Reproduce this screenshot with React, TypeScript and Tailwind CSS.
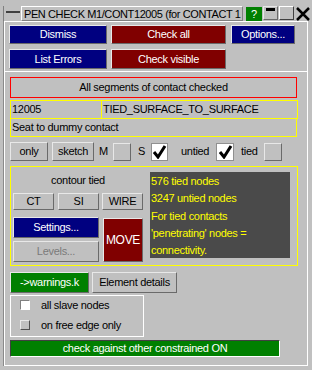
import React from "react";

const raised = "border border-t-[#e8e8e8] border-l-[#e8e8e8] border-b-[#6a6a6a] border-r-[#6a6a6a]";

function Btn({ className, children }: { className: string; children: React.ReactNode }) {
  return (
    <div className={`flex shrink-0 items-center justify-center whitespace-nowrap ${raised} ${className}`}>
      {children}
    </div>
  );
}

function Check() {
  return (
    <svg width="15" height="15" viewBox="0 0 15 15">
      <path d="M2 8 L6 13 L13 2" fill="none" stroke="#000" strokeWidth="3" />
    </svg>
  );
}

export default function App() {
  const info = ["576 tied nodes", "3247 untied nodes", "For tied contacts", "'penetrating' nodes =", "connectivity."];

  return (
    <div className="h-[370px] w-[312px] overflow-hidden bg-[#c0c0c0] font-['Liberation_Sans',sans-serif] text-[11px] leading-none tracking-[-0.3px] text-black">
      {/* title bar */}
      <div className="flex h-[21px] pl-[3px] pt-[6px]">
        <div className="flex h-[15px] w-[18px] items-center justify-center border-l border-[#808080] pb-[3px]">
          <div className="h-[2px] w-[14px] bg-[#404040]" />
        </div>
        <div className="h-[15px] w-[222px] overflow-hidden whitespace-nowrap border border-t-white border-l-white border-b-[#808080] border-r-[#808080] pl-[2px] pt-[2px] tracking-[-0.4px]">
          PEN CHECK M1/CONT12005 (for CONTACT 1
        </div>
        <div className="ml-[3px] mt-[1px] flex h-[14px] w-[16px] items-center justify-center bg-[#008000] text-white">?</div>
        <div className={`ml-[1px] h-[14px] w-[15px] px-[2px] pt-[1px] ${raised}`}>
          <div className="h-[3px] bg-black" />
        </div>
        <div className="ml-[1px] h-[14px] w-[15px] border border-t-white border-l-white border-b-[#404040] border-r-[#404040]" />
        <div className="ml-[1px] flex h-[15px] w-[16px] items-center justify-center">
          <svg width="14" height="14" viewBox="0 0 14 14">
            <path d="M1 1 L13 13 M13 1 L1 13" stroke="#000" strokeWidth="2.5" />
          </svg>
        </div>
      </div>

      {/* main panel */}
      <div className="ml-[3px] w-[305px] border-l border-[#8a8a8a]">
        <div className="h-[345px] w-[304px] border border-white">
          <div className="flex flex-col gap-[5px] pl-[4px] pt-[3px] text-white">
            <div className="flex">
              <Btn className="h-[19px] w-[98px] bg-[#000080]">Dismiss</Btn>
              <Btn className="ml-[4px] h-[19px] w-[115px] bg-[#800000]">Check all</Btn>
              <Btn className="ml-[5px] h-[19px] w-[64px] bg-[#000080]">Options...</Btn>
            </div>
            <div className="flex">
              <Btn className="h-[20px] w-[98px] bg-[#000080]">List Errors</Btn>
              <Btn className="ml-[4px] h-[20px] w-[115px] bg-[#800000]">Check visible</Btn>
            </div>
          </div>
          <div className="mt-[2px] h-[1px] bg-white" />

          <div className="flex flex-col pl-[5px]">
            <div className="mt-[5px] flex h-[21px] w-[287px] items-center justify-center border border-[#ff0000]">
              All segments of contact checked
            </div>
            <div className="mt-[2px] flex h-[19px] w-[288px] border border-[#ffff00]">
              <div className="flex w-[91px] items-center border-r border-[#ffff00] pl-[1px]">12005</div>
              <div className="flex items-center pl-[1px]">TIED_SURFACE_TO_SURFACE</div>
            </div>
            <div className="flex h-[18px] w-[287px] items-center border-x border-b border-[#ffff00] pl-[1px]">
              Seat to dummy contact
            </div>

            {/* display options */}
            <div className="mt-[5px] flex h-[19px] items-center">
              <Btn className="h-[19px] w-[38px]">only</Btn>
              <Btn className="ml-[4px] h-[19px] w-[42px]">sketch</Btn>
              <span className="w-[19px] pl-[5px]">M</span>
              <div className={`h-[18px] w-[18px] ${raised}`} />
              <span className="w-[20px] pl-[7px]">S</span>
              <div className="flex h-[18px] w-[17px] items-center justify-center border border-[#909090] bg-white">
                <Check />
              </div>
              <span className="w-[48px] pl-[13px]">untied</span>
              <div className="flex h-[18px] w-[18px] items-center justify-center border border-[#909090] bg-white">
                <Check />
              </div>
              <span className="w-[30px] pl-[7px]">tied</span>
              <div className={`h-[18px] w-[18px] ${raised}`} />
            </div>

            {/* contour box */}
            <div className="mt-[5px] flex h-[100px] w-[288px] border border-[#ffff00] pl-[2px]">
              <div className="flex w-[130px] flex-col">
                <div className="flex h-[26px] items-center justify-center">contour tied</div>
                <div className="flex">
                  <Btn className="h-[17px] w-[41px]">CT</Btn>
                  <Btn className="ml-[4px] h-[17px] w-[41px]">SI</Btn>
                  <Btn className="ml-[3px] h-[17px] w-[41px]">WIRE</Btn>
                </div>
                <div className="mt-[7px] flex">
                  <div className="flex flex-col gap-[3px]">
                    <Btn className="h-[21px] w-[86px] bg-[#000080] text-white">Settings...</Btn>
                    <Btn className="h-[21px] w-[86px] text-[#7a7a7a]">Levels...</Btn>
                  </div>
                  <Btn className="ml-[4px] mt-[1px] h-[44px] w-[40px] bg-[#800000] text-[12px] text-white">MOVE</Btn>
                </div>
              </div>
              <div className="ml-[7px] mt-[5px] h-[86px] w-[140px] bg-[#4a4a4a] pl-[1px] pt-[1px] leading-[17.3px] text-[#ffff00]">
                {info.map((line) => (
                  <div key={line}>{line}</div>
                ))}
              </div>
            </div>

            <div className="mt-[6px] flex">
              <Btn className="h-[21px] w-[79px] bg-[#008000] text-white">-&gt;warnings.k</Btn>
              <Btn className="ml-[3px] h-[21px] w-[85px]">Element details</Btn>
            </div>

            <div className="mt-[2px] flex h-[42px] w-[134px] flex-col border border-white pl-[9px] pt-[4px]">
              <div className="flex h-[10px] items-center">
                <div className="h-[10px] w-[10px] border border-t-[#808080] border-l-[#808080] border-b-white border-r-white bg-white" />
                <span className="ml-[11px]">all slave nodes</span>
              </div>
              <div className="mt-[10px] flex h-[10px] items-center">
                <div className="h-[10px] w-[10px] border border-t-[#e8e8e8] border-l-[#e8e8e8] border-b-[#505050] border-r-[#505050]" />
                <span className="ml-[11px]">on free edge only</span>
              </div>
            </div>

            <div className="mt-[3px] flex h-[17px] w-[270px] items-center justify-center border border-t-[#404040] border-l-[#404040] border-b-white border-r-white bg-[#008000] text-white">
              check against other constrained ON
            </div>
          </div>
        </div>
      </div>
    </div>
  );
}
